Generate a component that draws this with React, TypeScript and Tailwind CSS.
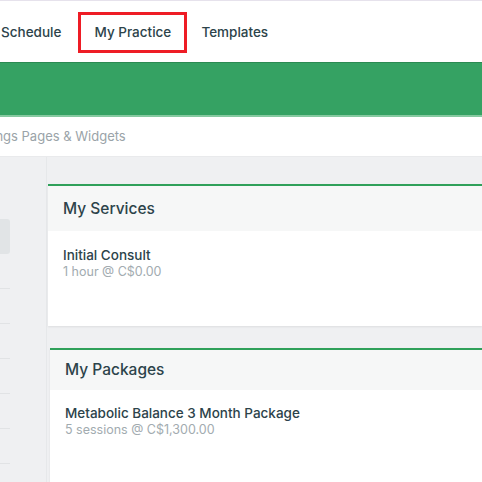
const services = [{ name: 'Initial Consult', detail: '1 hour @ C$0.00' }];
const packages = [{ name: 'Metabolic Balance 3 Month Package', detail: '5 sessions @ C$1,300.00' }];

function Card({ title, items, className, headerH, bodyPt }: { title: string; items: { name: string; detail: string }[]; className: string; headerH: string; bodyPt: string }) {
  return (
    <div className={`bg-white border-t-2 border-[#2fa05a] shadow-[0_1px_2px_rgba(0,0,0,0.08)] ${className}`}>
      <div className={`${headerH} bg-[#f6f7f7] flex items-center px-[15px]`}>
        <h3 className="text-[15.5px] font-medium text-[#2c434a]">{title}</h3>
      </div>
      <div className={`px-[15px] ${bodyPt} h-[95px]`}>
        {items.map((item) => (
          <div key={item.name}>
            <p className="text-[13.5px] font-medium text-[#2c434a] leading-[18px]">{item.name}</p>
            <p className="text-[12.5px] text-[#a2abb0] leading-[16px]">{item.detail}</p>
          </div>
        ))}
      </div>
    </div>
  );
}

export default function App() {
  return (
    <div className="w-[482px] h-[482px] overflow-hidden bg-[#eff0f2] font-['Inter',sans-serif]">
      <div className="h-[62px] pt-[2px] bg-white border-t border-[#e6e2ec] flex items-center">
        <span className="text-[13.5px] font-medium text-[#2c434a] ml-[1px]">Schedule</span>
        <div className="ml-[17px] border-[3px] border-[#ee1c25] h-[41px] w-[109px] flex items-center justify-center">
          <span className="text-[13.5px] font-medium text-[#2c434a]">My Practice</span>
        </div>
        <span className="ml-[14px] text-[13.5px] font-medium text-[#2c434a]">Templates</span>
      </div>
      <div className="h-[55px] bg-[#35a263] border-t border-[#2b8a52] border-b-2 border-b-[#86c9a0]"></div>
      <div className="h-[40px] bg-white flex items-center overflow-hidden border-b border-[#e9eaec]">
        <span className="text-[13px] text-[#9aa3a8] -ml-[39px] whitespace-nowrap">Bookings Pages &amp; Widgets</span>
      </div>
      <div className="flex">
        <div className="w-[47px] shrink-0 border-r border-[#e6e8ea]">
          <div className="mt-[62px] h-[35px] w-[10px] bg-[#e1e4e6] rounded-r-[3px]"></div>
          <div className="mt-[34px] w-[10px] space-y-[34px]">
            {[0, 1, 2, 3, 4, 5].map((i) => (
              <div key={i} className="h-px bg-[#e1e3e5]"></div>
            ))}
          </div>
        </div>
        <div className="flex-1 pt-[27px]">
          <Card title="My Services" items={services} className="ml-[1px]" headerH="h-[45px]" bodyPt="pt-[15px]" />
          <Card title="My Packages" items={packages} className="ml-[3px] mt-[22px]" headerH="h-[40px]" bodyPt="pt-[14px]" />
        </div>
      </div>
    </div>
  );
}
